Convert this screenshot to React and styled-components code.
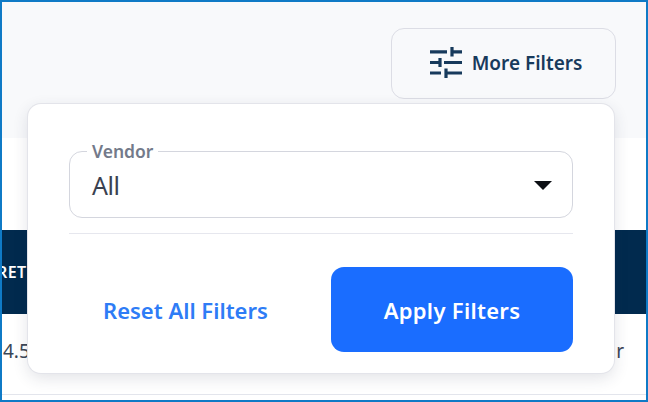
import React from "react";
import styled, { createGlobalStyle } from "styled-components";

const GlobalStyle = createGlobalStyle`
  html, body {
    margin: 0;
    padding: 0;
    background: #fff;
    font-family: "Noto Sans", "Open Sans", sans-serif;
  }
`;

const Frame = styled.div`
  position: relative;
  box-sizing: border-box;
  width: 648px;
  height: 402px;
  border: 2px solid #0f7ac6;
  overflow: hidden;
  background: #fff;
`;

const Header = styled.header`
  box-sizing: border-box;
  height: 136px;
  padding: 26px 30px 0 0;
  display: flex;
  justify-content: flex-end;
  align-items: flex-start;
  background: #f8f9fb;
`;

const MoreFilters = styled.button`
  box-sizing: border-box;
  width: 225px;
  height: 71px;
  display: flex;
  align-items: center;
  justify-content: center;
  gap: 10px;
  padding: 0 0 2px 5px;
  border: 1px solid #dcdde5;
  border-radius: 13px;
  background: #f8f9fb;
  color: #173a5c;
  font: 600 19px "Noto Sans", sans-serif;
`;

const TableArea = styled.div`
  padding-top: 92px;
`;

const TableHead = styled.div`
  height: 84px;
  display: flex;
  align-items: center;
  justify-content: space-between;
  background: #012a4e;
  color: #fff;
  font: 600 16px "Noto Sans", sans-serif;
`;

const HeadCell = styled.span`
  margin-left: -5px;
  letter-spacing: 0.4px;
`;

const TableRow = styled.div`
  box-sizing: border-box;
  height: 81px;
  padding: 24px 22px 0 0;
  display: flex;
  justify-content: space-between;
  border-bottom: 1px solid #e3e5ec;
  color: #3a4656;
  font: 400 19px "Noto Sans", sans-serif;
`;

const RowCell = styled.span`
  margin-left: ${(p) => p.$offset || 0}px;
`;

const Popover = styled.div`
  position: absolute;
  left: 26px;
  top: 102px;
  box-sizing: border-box;
  width: 586px;
  height: 269px;
  padding: 38px 41px 0;
  background: #fff;
  border-radius: 13px;
  box-shadow: 0 0 0 1px #e3e4ea, 0 5px 16px rgba(40, 50, 80, 0.14);
`;

const Field = styled.fieldset`
  box-sizing: border-box;
  height: 76px;
  margin: 0;
  padding: 0 22px 7px;
  border: 1px solid #d4d6de;
  border-radius: 13px;
  display: flex;
  align-items: center;
  justify-content: space-between;
`;

const FieldLegend = styled.legend`
  padding: 0 5px;
  margin-left: -5px;
  color: #737a8a;
  font: 600 17.500px/18px "Noto Sans", sans-serif;
`;

const FieldValue = styled.span`
  color: #3a4150;
  font: 400 25px/1 "Noto Sans", sans-serif;
  letter-spacing: -0.5px;
`;

const Caret = styled.span`
  width: 0;
  height: 0;
  margin-right: -2px;
  border-left: 9.500px solid transparent;
  border-right: 9.500px solid transparent;
  border-top: 9px solid #0c0f14;
`;

const Divider = styled.hr`
  margin: 15px 0 33px;
  border: 0;
  border-top: 1px solid #e6e7ee;
`;

const Actions = styled.div`
  display: flex;
  justify-content: space-between;
  align-items: center;
`;

const ResetButton = styled.button`
  margin-left: 34px;
  padding: 0;
  border: 0;
  background: none;
  color: #2e7cf6;
  font: 600 22px "Noto Sans", sans-serif;
`;

const ApplyButton = styled.button`
  width: 242px;
  height: 85px;
  padding: 0;
  border: 0;
  border-radius: 13px;
  background: #1a6dff;
  color: #fff;
  font: 600 22px "Noto Sans", sans-serif;
  letter-spacing: 0.3px;
`;

const SlidersIcon = () => (
  <svg width="32" height="32" viewBox="0 0 32 32" fill="none" stroke="#173a5c" strokeWidth="3.200">
    <path d="M0 4.800H17M22 0V9.500M22 4.800H32" />
    <path d="M0 15.500H10M10 11V20M14 15.500H32" />
    <path d="M0 26H11M16 21.500V31M16 26H32" />
  </svg>
);

export default function App() {
  return (
    <Frame>
      <GlobalStyle />
      <Header>
        <MoreFilters>
          <SlidersIcon />
          More Filters
        </MoreFilters>
      </Header>
      <TableArea>
        <TableHead>
          <HeadCell>RET</HeadCell>
        </TableHead>
        <TableRow>
          <RowCell $offset={1}>4.5</RowCell>
          <RowCell>r</RowCell>
        </TableRow>
      </TableArea>
      <Popover>
        <Field>
          <FieldLegend>Vendor</FieldLegend>
          <FieldValue>All</FieldValue>
          <Caret />
        </Field>
        <Divider />
        <Actions>
          <ResetButton>Reset All Filters</ResetButton>
          <ApplyButton>Apply Filters</ApplyButton>
        </Actions>
      </Popover>
    </Frame>
  );
}
